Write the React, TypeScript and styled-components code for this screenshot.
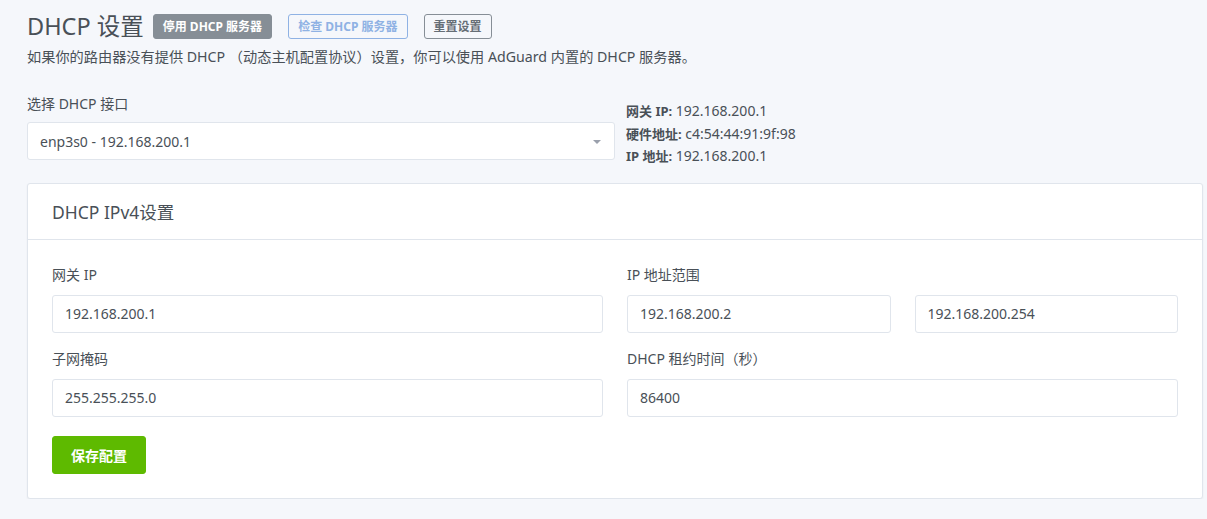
import React from "react";
import styled, { createGlobalStyle } from "styled-components";

const Global = createGlobalStyle`
  html, body { margin: 0; padding: 0; background: #f5f7fb; }
  body {
    font-family: "Noto Sans", "Noto Sans CJK SC", sans-serif;
    color: #495057;
    font-size: 14px;
  }
  * { box-sizing: border-box; }
`;

const Page = styled.div`
  width: 1176px;
  margin-left: 27px;
  padding-top: 12px;
`;

const TitleRow = styled.div`
  display: flex;
  align-items: center;
  height: 28px;
`;

const Title = styled.h1`
  margin: 0 9px 0 0;
  font-size: 23.5px;
  font-weight: 400;
  line-height: 28px;
  color: #495057;
`;

const Btn = styled.button<{ $kind: "secondary" | "outlinePrimary" | "outlineSecondary" }>`
  height: 25px;
  padding: 0 9px;
  margin-right: 16px;
  border-radius: 3px;
  font-family: inherit;
  font-size: 12px;
  font-weight: 700;
  line-height: 23px;
  cursor: pointer;
  border: 1px solid
    ${(p) => (p.$kind === "secondary" ? "#868e96" : p.$kind === "outlinePrimary" ? "#8fb2e4" : "#868e96")};
  background: ${(p) => (p.$kind === "secondary" ? "#868e96" : "transparent")};
  color: ${(p) => (p.$kind === "secondary" ? "#fff" : p.$kind === "outlinePrimary" ? "#8fb2e4" : "#666e76")};
`;

const Subtitle = styled.p`
  margin: 7px 0 0;
  font-size: 14.2px;
  line-height: 20px;
  color: #495057;
`;

const TopGrid = styled.div`
  display: grid;
  grid-template-columns: 588px 1fr;
  column-gap: 11px;
  margin-top: 27px;
  align-items: start;
`;

const Label = styled.label<{ $gap?: number }>`
  display: block;
  font-size: 14px;
  line-height: 20px;
  margin-bottom: ${(p) => p.$gap ?? 10}px;
  color: #495057;
`;

const SelectBox = styled.div`
  position: relative;
  height: 38px;
  border: 1px solid #e0e5ec;
  border-radius: 3px;
  background: #fff;
  padding: 0 12px;
  display: flex;
  align-items: center;
  font-size: 14px;
  color: #495057;
`;

const Caret = styled.span`
  position: absolute;
  right: 13px;
  top: 17px;
  width: 0;
  height: 0;
  border-left: 4px solid transparent;
  border-right: 4px solid transparent;
  border-top: 4px solid #9aa0ac;
`;

const Info = styled.div`
  padding-top: 6px;
  font-size: 14px;
  line-height: 22.5px;
`;

const InfoKey = styled.strong`
  font-weight: 700;
  font-size: 13px;
`;

const Card = styled.div`
  margin-top: 15px;
  background: #fff;
  border: 1px solid #e0e5ec;
  border-radius: 3px;
  box-shadow: 0 1px 2px rgba(0, 0, 0, 0.05);
`;

const CardHeader = styled.div`
  height: 56px;
  display: flex;
  align-items: center;
  padding: 0 24px;
  border-bottom: 1px solid #e0e5ec;
`;

const CardTitle = styled.h3`
  margin: 0;
  font-size: 17.5px;
  font-weight: 400;
  color: #495057;
`;

const CardBody = styled.div`
  padding: 25px 24px 24px;
`;

const FormGrid = styled.div`
  display: grid;
  grid-template-columns: 1fr 1fr;
  column-gap: 24px;
  row-gap: 16px;
`;

const Pair = styled.div`
  display: grid;
  grid-template-columns: 1fr 1fr;
  column-gap: 24px;
`;

const Input = styled.input`
  display: block;
  width: 100%;
  height: 38px;
  border: 1px solid #e0e5ec;
  border-radius: 3px;
  background: #fff;
  padding: 0 12px;
  font-family: inherit;
  font-size: 14px;
  color: #495057;
  outline: none;
`;

const SaveBtn = styled.button`
  margin-top: 19px;
  height: 38px;
  padding: 0 18px;
  border: 1px solid #5eba00;
  border-radius: 3px;
  background: #5eba00;
  color: #fff;
  font-family: inherit;
  font-size: 14px;
  font-weight: 700;
`;

export default function App() {
  return (
    <>
      <Global />
      <Page>
        <TitleRow>
          <Title>DHCP 设置</Title>
          <Btn $kind="secondary">停用 DHCP 服务器</Btn>
          <Btn $kind="outlinePrimary">检查 DHCP 服务器</Btn>
          <Btn $kind="outlineSecondary">重置设置</Btn>
        </TitleRow>
        <Subtitle>
          如果你的路由器没有提供 DHCP （动态主机配置协议）设置，你可以使用 AdGuard 内置的 DHCP 服务器。
        </Subtitle>
        <TopGrid>
          <div>
            <Label $gap={8}>选择 DHCP 接口</Label>
            <SelectBox>
              enp3s0 - 192.168.200.1
              <Caret />
            </SelectBox>
          </div>
          <Info>
            <div>
              <InfoKey>网关 IP:</InfoKey> 192.168.200.1
            </div>
            <div>
              <InfoKey>硬件地址:</InfoKey> c4:54:44:91:9f:98
            </div>
            <div>
              <InfoKey>IP 地址:</InfoKey> 192.168.200.1
            </div>
          </Info>
        </TopGrid>
        <Card>
          <CardHeader>
            <CardTitle>DHCP IPv4设置</CardTitle>
          </CardHeader>
          <CardBody>
            <FormGrid>
              <div>
                <Label>网关 IP</Label>
                <Input defaultValue="192.168.200.1" />
              </div>
              <div>
                <Label>IP 地址范围</Label>
                <Pair>
                  <Input defaultValue="192.168.200.2" />
                  <Input defaultValue="192.168.200.254" />
                </Pair>
              </div>
              <div>
                <Label>子网掩码</Label>
                <Input defaultValue="255.255.255.0" />
              </div>
              <div>
                <Label>DHCP 租约时间（秒）</Label>
                <Input defaultValue="86400" />
              </div>
            </FormGrid>
            <SaveBtn>保存配置</SaveBtn>
          </CardBody>
        </Card>
      </Page>
    </>
  );
}
